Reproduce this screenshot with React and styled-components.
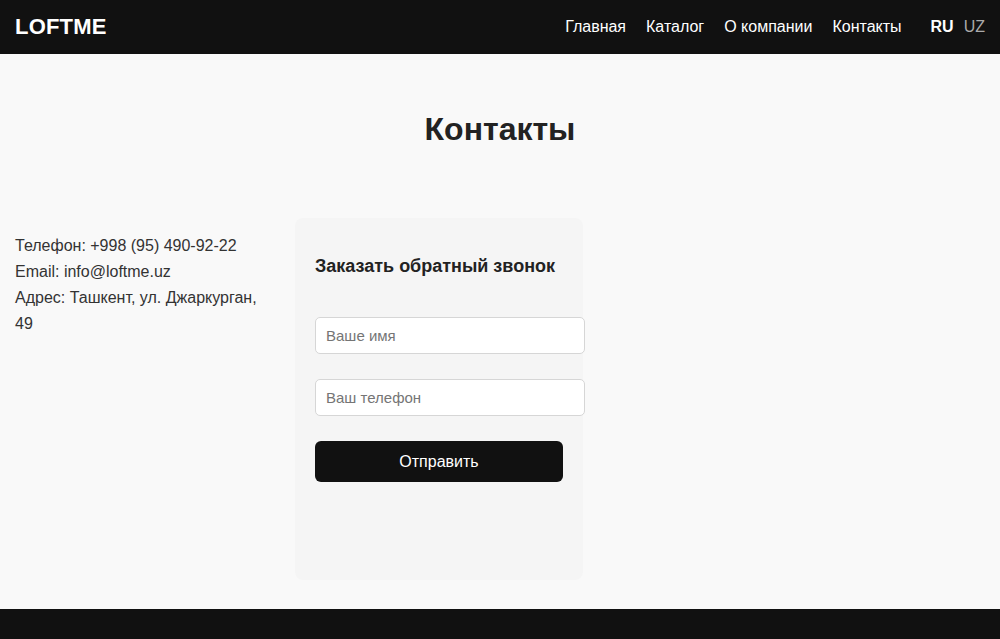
import React from "react";
import styled, { createGlobalStyle } from "styled-components";

const GlobalStyle = createGlobalStyle`
    html {
        overflow-y: scroll;
    }
    body {
        margin: 0;
        background-color: #f9f9f9;
        font-family: "Liberation Sans", Arial, sans-serif;
        color: #222;
    }
`

const Sheader = styled.header`
    display: flex;
    justify-content: space-between;
    align-items: center;
    height: 54px;
    padding: 0 15px;
    background-color: #111;
`

const Slogo = styled.div`
    font-size: 22px;
    font-weight: bold;
    color: white;
    letter-spacing: 0.2px;
`

const Sright = styled.div`
    display: flex;
    align-items: center;
    gap: 29px;
`

const Snav = styled.nav`
    display: flex;
    gap: 20px;
`

const Slink = styled.a`
    font-size: 16px;
    color: white;
    text-decoration: none;
    cursor: pointer;
`

const Slangs = styled.div`
    display: flex;
    gap: 10px;
`

const Slang = styled.span`
    font-size: 16px;
    color: ${(p) => (p.active ? "white" : "#aaa")};
    font-weight: ${(p) => (p.active ? "bold" : "normal")};
    cursor: pointer;
`

const Smain = styled.main`
    padding: 57px 15px 29px;
`

const Stitle = styled.h1`
    margin: 0 0 70px;
    text-align: center;
    font-size: 32px;
    line-height: 37px;
    color: #222;
`

const Srow = styled.div`
    display: flex;
    gap: 30px;
`

const Sinfo = styled.div`
    width: 250px;
    padding-top: 15px;
    font-size: 16px;
    line-height: 26px;
    color: #333;
`

const Scard = styled.div`
    width: 288px;
    height: 362px;
    box-sizing: border-box;
    padding: 20px;
    background-color: #f5f5f5;
    border-radius: 8px;
`

const Sform_title = styled.h3`
    margin: 17px 0 40px;
    font-size: 18px;
    line-height: 22px;
    color: #222;
`

const Sinput = styled.input`
    display: block;
    width: 100%;
    margin-bottom: 25px;
    padding: 9px 10px;
    border: 1px solid #d6d6d6;
    border-radius: 5px;
    background-color: white;
    font-family: "Liberation Sans", Arial, sans-serif;
    font-size: 15px;
    line-height: 17px;
    color: #222;
    ::placeholder {
        color: #777;
    }
`

const Sbutton = styled.button`
    display: block;
    width: 100%;
    height: 41px;
    border: none;
    border-radius: 6px;
    background-color: #111;
    color: white;
    font-family: "Liberation Sans", Arial, sans-serif;
    font-size: 16px;
    cursor: pointer;
`

const Sfooter = styled.footer`
    height: 110px;
    background-color: #111;
`

const App = () => {
    return (
        <>
            <GlobalStyle />
            <Sheader>
                <Slogo>LOFTME</Slogo>
                <Sright>
                    <Snav>
                        <Slink>Главная</Slink>
                        <Slink>Каталог</Slink>
                        <Slink>О компании</Slink>
                        <Slink>Контакты</Slink>
                    </Snav>
                    <Slangs>
                        <Slang active>RU</Slang>
                        <Slang>UZ</Slang>
                    </Slangs>
                </Sright>
            </Sheader>
            <Smain>
                <Stitle>Контакты</Stitle>
                <Srow>
                    <Sinfo>
                        Телефон: +998 (95) 490-92-22<br />
                        Email: info@loftme.uz<br />
                        Адрес: Ташкент, ул. Джаркурган, 49
                    </Sinfo>
                    <Scard>
                        <Sform_title>Заказать обратный звонок</Sform_title>
                        <Sinput placeholder="Ваше имя" />
                        <Sinput placeholder="Ваш телефон" />
                        <Sbutton>Отправить</Sbutton>
                    </Scard>
                </Srow>
            </Smain>
            <Sfooter />
        </>
    )
}

export default App;
